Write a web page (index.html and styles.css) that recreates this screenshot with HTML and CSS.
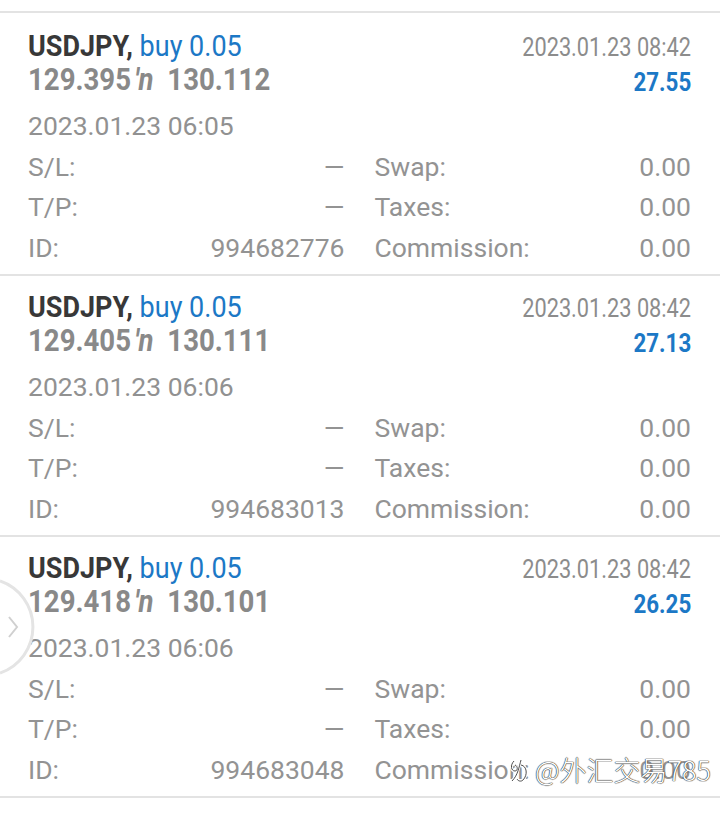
FILE: index.html
```html
<!DOCTYPE html>
<html>
<head>
<meta charset="utf-8">
<link rel="stylesheet" href="styles.css">
</head>
<body>
<div class="list">
  <div class="card">
    <div class="head">
      <div class="head-left">
        <div class="line1"><span class="cond"><span class="sym">USDJPY,</span> <span class="side">buy 0.05</span></span></div>
        <div class="line2"><span class="cond">129.395<span class="arr">′n</span>&nbsp; 130.112</span></div>
      </div>
      <div class="head-right">
        <div class="line1"><span class="cond cond-r time">2023.01.23 08:42</span></div>
        <div class="line2"><span class="cond cond-r profit">27.55</span></div>
      </div>
    </div>
    <div class="open">2023.01.23 06:05</div>
    <div class="grid">
      <div class="pair"><span>S/L:</span><span>—</span></div>
      <div class="pair"><span>Swap:</span><span>0.00</span></div>
      <div class="pair"><span>T/P:</span><span>—</span></div>
      <div class="pair"><span>Taxes:</span><span>0.00</span></div>
      <div class="pair"><span>ID:</span><span>994682776</span></div>
      <div class="pair"><span>Commission:</span><span>0.00</span></div>
    </div>
  </div>
  <div class="card">
    <div class="head">
      <div class="head-left">
        <div class="line1"><span class="cond"><span class="sym">USDJPY,</span> <span class="side">buy 0.05</span></span></div>
        <div class="line2"><span class="cond">129.405<span class="arr">′n</span>&nbsp; 130.111</span></div>
      </div>
      <div class="head-right">
        <div class="line1"><span class="cond cond-r time">2023.01.23 08:42</span></div>
        <div class="line2"><span class="cond cond-r profit">27.13</span></div>
      </div>
    </div>
    <div class="open">2023.01.23 06:06</div>
    <div class="grid">
      <div class="pair"><span>S/L:</span><span>—</span></div>
      <div class="pair"><span>Swap:</span><span>0.00</span></div>
      <div class="pair"><span>T/P:</span><span>—</span></div>
      <div class="pair"><span>Taxes:</span><span>0.00</span></div>
      <div class="pair"><span>ID:</span><span>994683013</span></div>
      <div class="pair"><span>Commission:</span><span>0.00</span></div>
    </div>
  </div>
  <div class="card">
    <div class="head">
      <div class="head-left">
        <div class="line1"><span class="cond"><span class="sym">USDJPY,</span> <span class="side">buy 0.05</span></span></div>
        <div class="line2"><span class="cond">129.418<span class="arr">′n</span>&nbsp; 130.101</span></div>
      </div>
      <div class="head-right">
        <div class="line1"><span class="cond cond-r time">2023.01.23 08:42</span></div>
        <div class="line2"><span class="cond cond-r profit">26.25</span></div>
      </div>
    </div>
    <div class="open">2023.01.23 06:06</div>
    <div class="grid">
      <div class="pair"><span>S/L:</span><span>—</span></div>
      <div class="pair"><span>Swap:</span><span>0.00</span></div>
      <div class="pair"><span>T/P:</span><span>—</span></div>
      <div class="pair"><span>Taxes:</span><span>0.00</span></div>
      <div class="pair"><span>ID:</span><span>994683048</span></div>
      <div class="pair"><span>Commission:</span><span>0.00</span></div>
    </div>
  </div>
</div>

<div class="handle">
  <svg width="40" height="110" viewBox="0 0 40 110">
    <path d="M0 8 A 48.6 48.6 0 0 1 0 100" fill="none" stroke="#e4e4e4" stroke-width="3"/>
    <path d="M9 44 L17 54 L9 64" fill="none" stroke="#d0d0d0" stroke-width="2"/>
  </svg>
</div>

<div class="watermark">
  <svg class="wm-logo" width="24" height="28" viewBox="0 0 24 28">
    <path d="M6 5 C 2 9, 3 15, 7 15 C 10 15, 10 10, 7 9 M13 4 C 11 11, 10 19, 4 25 M13 9 C 19 10, 20 19, 15 24 C 13 26, 10 25, 9 23" fill="none" stroke="#fff" stroke-width="2.8"/>
    <path d="M6 5 C 2 9, 3 15, 7 15 C 10 15, 10 10, 7 9 M13 4 C 11 11, 10 19, 4 25 M13 9 C 19 10, 20 19, 15 24 C 13 26, 10 25, 9 23" fill="none" stroke="#3a3a3a" stroke-width="0.9"/>
  </svg>
  <span class="wm-text">@外汇交易785</span>
</div>
</body>
</html>
```

FILE: styles.css
```css
html, body {
  margin: 0;
  padding: 0;
  background: #ffffff;
}

body {
  padding-top: 11px;
  font-family: Roboto, "Noto Sans", sans-serif;
  color: #919191;
  width: 720px;
  height: 813px;
  overflow: hidden;
  position: relative;
}

.list {
  border-top: 2px solid #e3e3e3;
}

.card {
  padding: 14px 29px 6.5px 28px;
  border-bottom: 2px solid #e3e3e3;
}

.card:first-child {
  padding-top: 16px;
}

.head {
  display: flex;
  justify-content: space-between;
  height: 68px;
}

.line1, .line2 {
  height: 34px;
  line-height: 34px;
  white-space: nowrap;
}

.head-right {
  text-align: right;
  padding-top: 2px;
}

.head-right .line2 {
  height: 32px;
}

.cond {
  display: inline-block;
  transform: scaleX(0.9);
  transform-origin: left center;
}

.cond-r {
  transform-origin: right center;
}

.head-left .line1 {
  font-size: 30px;
  font-weight: 700;
}

.sym {
  color: #383838;
}

.side {
  color: #1c78c6;
  font-weight: 400;
}

.head-left .line2 {
  font-size: 31px;
  font-weight: 700;
  color: #898989;
}

.head-left .line2 .cond {
  transform: scaleX(0.89);
}

.arr {
  display: inline-block;
  margin-left: 4px;
  font-style: italic;
}

.time {
  font-size: 25px;
  color: #8c8c8c;
  transform: scaleX(0.87);
}

.profit {
  font-size: 26px;
  font-weight: 700;
  color: #1c78c6;
  transform: scaleX(0.86);
}

.open {
  margin-top: 8px;
  height: 41px;
  line-height: 41px;
  font-size: 26.5px;
}

.grid {
  display: grid;
  grid-template-columns: 1fr 1fr;
  column-gap: 30px;
  grid-auto-rows: 40.5px;
  align-items: center;
  font-size: 26.5px;
  color: #939393;
}

.pair {
  display: flex;
  justify-content: space-between;
  white-space: nowrap;
}

.handle {
  position: absolute;
  left: 0;
  top: 573px;
  width: 40px;
  height: 110px;
}

.handle svg {
  display: block;
}

.watermark {
  position: absolute;
  left: 508px;
  top: 754px;
  display: flex;
  align-items: center;
  gap: 3px;
}

.wm-logo {
  display: block;
}

.wm-text {
  font-family: "Noto Sans CJK SC", "Noto Sans", sans-serif;
  font-size: 27px;
  line-height: 32px;
  color: #ffffff;
  font-weight: 300;
  text-shadow: 0 0 1px #333, 0 0 1px #333, 0 0 1px #333;
}
```
